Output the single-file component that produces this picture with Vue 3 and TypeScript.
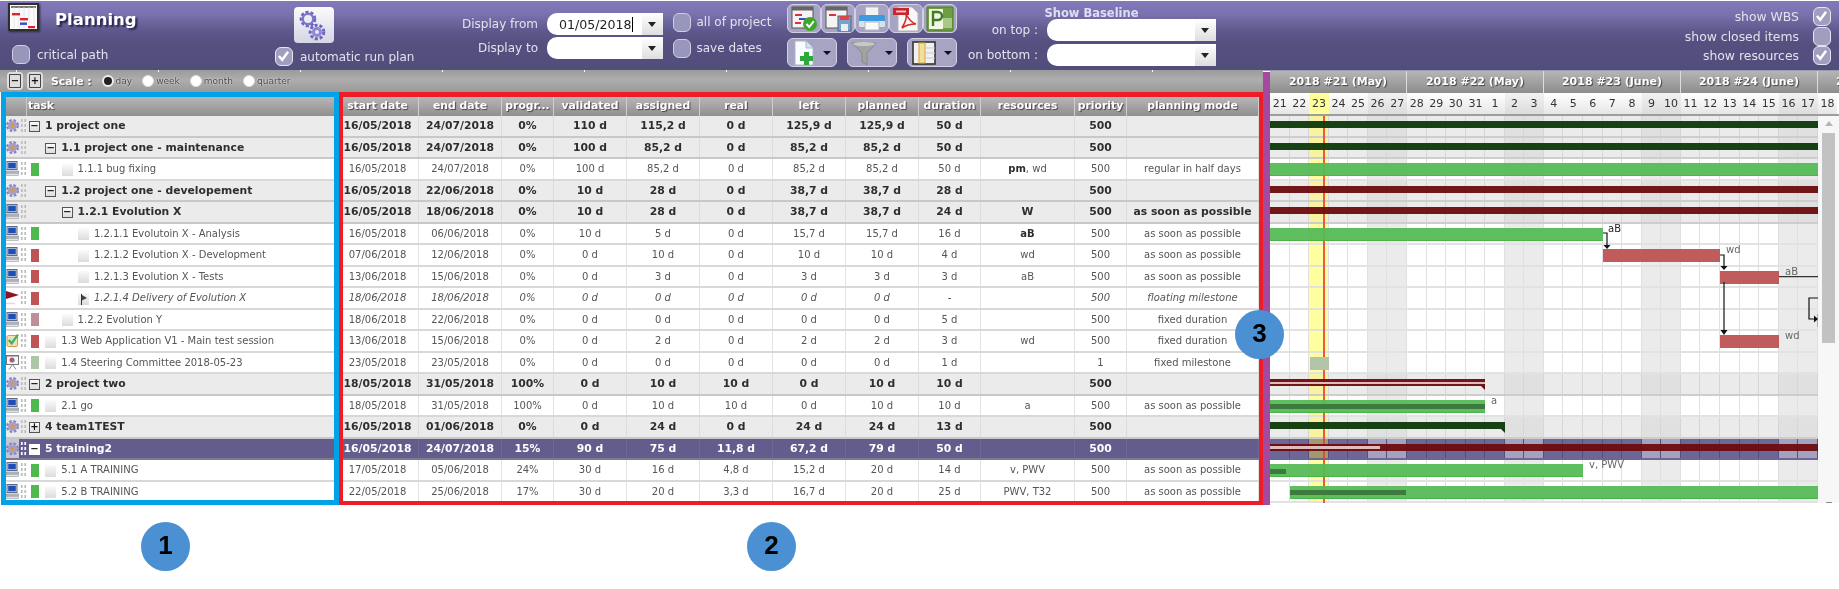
<script setup lang="ts">
type Kind = 'task' | 'group' | 'sel'
type Icon = 'gear' | 'pc' | 'flag' | 'check' | 'board'
interface Row {
  name: string
  level: number
  kind: Kind
  icon: Icon
  tree: 'minus' | 'plus' | 'leaf' | 'flag'
  swatch?: string
  italic?: boolean
  vals: string[]
  res?: string
  resRest?: string
  resBold?: boolean
}
interface Bar {
  row: number
  left: number
  width: number
  type: string
  prog?: number
  tip?: boolean
}
interface Label { row: number; left: number; text: string; dark?: boolean }

const asap = 'as soon as possible'
const green = '#4fb84f'
const red = '#bf5454'

const rows: Row[] = [
  { name: '1 project one', level: 0, kind: 'group', icon: 'gear', tree: 'minus', vals: ['16/05/2018', '24/07/2018', '0%', '110 d', '115,2 d', '0 d', '125,9 d', '125,9 d', '50 d', '', '500', ''] },
  { name: '1.1 project one - maintenance', level: 1, kind: 'group', icon: 'gear', tree: 'minus', vals: ['16/05/2018', '24/07/2018', '0%', '100 d', '85,2 d', '0 d', '85,2 d', '85,2 d', '50 d', '', '500', ''] },
  { name: '1.1.1 bug fixing', level: 2, kind: 'task', icon: 'pc', tree: 'leaf', swatch: green, res: 'pm', resRest: ', wd', resBold: true, vals: ['16/05/2018', '24/07/2018', '0%', '100 d', '85,2 d', '0 d', '85,2 d', '85,2 d', '50 d', '', '500', 'regular in half days'] },
  { name: '1.2 project one - developement', level: 1, kind: 'group', icon: 'gear', tree: 'minus', vals: ['16/05/2018', '22/06/2018', '0%', '10 d', '28 d', '0 d', '38,7 d', '38,7 d', '28 d', '', '500', ''] },
  { name: '1.2.1 Evolution X', level: 2, kind: 'group', icon: 'pc', tree: 'minus', res: 'W', vals: ['16/05/2018', '18/06/2018', '0%', '10 d', '28 d', '0 d', '38,7 d', '38,7 d', '24 d', '', '500', asap] },
  { name: '1.2.1.1 Evolutoin X - Analysis', level: 3, kind: 'task', icon: 'pc', tree: 'leaf', swatch: green, res: 'aB', resBold: true, vals: ['16/05/2018', '06/06/2018', '0%', '10 d', '5 d', '0 d', '15,7 d', '15,7 d', '16 d', '', '500', asap] },
  { name: '1.2.1.2 Evolution X - Development', level: 3, kind: 'task', icon: 'pc', tree: 'leaf', swatch: red, res: 'wd', vals: ['07/06/2018', '12/06/2018', '0%', '0 d', '10 d', '0 d', '10 d', '10 d', '4 d', '', '500', asap] },
  { name: '1.2.1.3 Evolution X - Tests', level: 3, kind: 'task', icon: 'pc', tree: 'leaf', swatch: red, res: 'aB', vals: ['13/06/2018', '15/06/2018', '0%', '0 d', '3 d', '0 d', '3 d', '3 d', '3 d', '', '500', asap] },
  { name: '1.2.1.4 Delivery of Evolution X', level: 3, kind: 'task', icon: 'flag', tree: 'flag', swatch: red, italic: true, vals: ['18/06/2018', '18/06/2018', '0%', '0 d', '0 d', '0 d', '0 d', '0 d', '-', '', '500', 'floating milestone'] },
  { name: '1.2.2 Evolution Y', level: 2, kind: 'task', icon: 'pc', tree: 'leaf', swatch: '#bd9099', vals: ['18/06/2018', '22/06/2018', '0%', '0 d', '0 d', '0 d', '0 d', '0 d', '5 d', '', '500', 'fixed duration'] },
  { name: '1.3 Web Application V1 - Main test session', level: 1, kind: 'task', icon: 'check', tree: 'leaf', swatch: red, res: 'wd', vals: ['13/06/2018', '15/06/2018', '0%', '0 d', '2 d', '0 d', '2 d', '2 d', '3 d', '', '500', 'fixed duration'] },
  { name: '1.4 Steering Committee 2018-05-23', level: 1, kind: 'task', icon: 'board', tree: 'leaf', swatch: '#adc6a8', vals: ['23/05/2018', '23/05/2018', '0%', '0 d', '0 d', '0 d', '0 d', '0 d', '1 d', '', '1', 'fixed milestone'] },
  { name: '2 project two', level: 0, kind: 'group', icon: 'gear', tree: 'minus', vals: ['18/05/2018', '31/05/2018', '100%', '0 d', '10 d', '10 d', '0 d', '10 d', '10 d', '', '500', ''] },
  { name: '2.1 go', level: 1, kind: 'task', icon: 'pc', tree: 'leaf', swatch: green, res: 'a', vals: ['18/05/2018', '31/05/2018', '100%', '0 d', '10 d', '10 d', '0 d', '10 d', '10 d', '', '500', asap] },
  { name: '4 team1TEST', level: 0, kind: 'group', icon: 'gear', tree: 'plus', vals: ['16/05/2018', '01/06/2018', '0%', '0 d', '24 d', '0 d', '24 d', '24 d', '13 d', '', '500', ''] },
  { name: '5 training2', level: 0, kind: 'sel', icon: 'gear', tree: 'minus', vals: ['16/05/2018', '24/07/2018', '15%', '90 d', '75 d', '11,8 d', '67,2 d', '79 d', '50 d', '', '500', ''] },
  { name: '5.1 A TRAINING', level: 1, kind: 'task', icon: 'pc', tree: 'leaf', swatch: green, res: 'v, PWV', vals: ['17/05/2018', '05/06/2018', '24%', '30 d', '16 d', '4,8 d', '15,2 d', '20 d', '14 d', '', '500', asap] },
  { name: '5.2 B TRAINING', level: 1, kind: 'task', icon: 'pc', tree: 'leaf', swatch: green, res: 'PWV, T32', vals: ['22/05/2018', '25/06/2018', '17%', '30 d', '20 d', '3,3 d', '16,7 d', '20 d', '25 d', '', '500', asap] },
]

const columns = [
  ['start date', 76], ['end date', 83], ['progr...', 52], ['validated', 73], ['assigned', 73], ['real', 73],
  ['left', 73], ['planned', 73], ['duration', 62], ['resources', 94], ['priority', 52], ['planning mode', 132],
] as [string, number][]
const gridColumns = columns.map(c => c[1] + 'px').join(' ')

const days = [21, 22, 23, 24, 25, 26, 27, 28, 29, 30, 31, 1, 2, 3, 4, 5, 6, 7, 8, 9, 10, 11, 12, 13, 14, 15, 16, 17, 18]
const isWeekend = (i: number) => i % 7 === 5 || i % 7 === 6
const weeks = ['2018 #21 (May)', '2018 #22 (May)', '2018 #23 (June)', '2018 #24 (June)', '2018 #25 (June)']

const bars: Bar[] = [
  { row: 0, left: 0, width: 548, type: 'sum-green' },
  { row: 1, left: 0, width: 548, type: 'sum-green' },
  { row: 2, left: 0, width: 548, type: 'task-green' },
  { row: 3, left: 0, width: 548, type: 'sum-red' },
  { row: 4, left: 0, width: 548, type: 'sum-red' },
  { row: 5, left: 0, width: 333, type: 'task-green' },
  { row: 6, left: 333, width: 117, type: 'task-red' },
  { row: 7, left: 450, width: 59, type: 'task-red' },
  { row: 9, left: 547, width: 1, type: 'task-pink' },
  { row: 10, left: 450, width: 59, type: 'task-red' },
  { row: 11, left: 40, width: 19, type: 'task-mile' },
  { row: 12, left: 0, width: 215, type: 'sum-red', prog: 215, tip: true },
  { row: 13, left: 0, width: 215, type: 'task-green', prog: 215 },
  { row: 14, left: 0, width: 235, type: 'sum-green', tip: true },
  { row: 15, left: 0, width: 548, type: 'sum-red', prog: 110 },
  { row: 16, left: 0, width: 313, type: 'task-green', prog: 16 },
  { row: 17, left: 20, width: 528, type: 'task-green', prog: 116 },
]
const labels: Label[] = [
  { row: 5, left: 338, text: 'aB', dark: true },
  { row: 6, left: 456, text: 'wd' },
  { row: 7, left: 515, text: 'aB' },
  { row: 10, left: 515, text: 'wd' },
  { row: 13, left: 221, text: 'a' },
  { row: 16, left: 319, text: 'v, PWV' },
]
const barsOf = (i: number) => bars.filter(b => b.row === i)
const labelsOf = (i: number) => labels.filter(l => l.row === i)
const typed = '01/05/2018'
</script>

<template>
  <div class="page">
    <svg class="defs" aria-hidden="true">
      <symbol id="gear" viewBox="0 0 13 15">
        <circle cx="6.5" cy="7.5" r="5.3" fill="none" stroke="#8886bd" stroke-width="2.4" stroke-dasharray="2.6 1.6" />
        <circle cx="6.5" cy="7.5" r="4.6" fill="#a3a1cf" />
        <circle cx="6.5" cy="7.5" r="2" fill="#e8952a" />
      </symbol>
      <symbol id="pc" viewBox="0 0 13 15">
        <rect x="1" y="0.5" width="10" height="8" fill="#d8dde8" stroke="#5f6a80" />
        <rect x="2.2" y="1.7" width="7.6" height="5.6" fill="#1d4fb8" />
        <rect x="0" y="10" width="12.5" height="2" fill="#c4c8d0" stroke="#7a7f88" stroke-width=".6" />
        <rect x="0" y="12.6" width="12.5" height="2" fill="#e2e4e8" stroke="#9a9ea6" stroke-width=".6" />
      </symbol>
      <symbol id="flag" viewBox="0 0 13 15">
        <path d="M0 1 L13 5 L0 9 Z" fill="#8f1420" />
        <path d="M0 13.5 H9" stroke="#dcdcdc" stroke-width="1.6" />
      </symbol>
      <symbol id="check" viewBox="0 0 13 15">
        <rect x="1" y="2.5" width="10.5" height="11" rx="1.5" fill="#f4e2b0" stroke="#d99a3a" />
        <rect x="3" y="4.5" width="6.5" height="7" fill="#cfe0f2" />
        <path d="M2.8 7 L5.6 10.4 L12 1.6" fill="none" stroke="#49b04a" stroke-width="2.2" />
      </symbol>
      <symbol id="board" viewBox="0 0 13 15">
        <rect x="0.5" y="0.5" width="12" height="9" fill="#f6f6f6" stroke="#777" />
        <path d="M0 1 H13" stroke="#777" />
        <circle cx="6" cy="5" r="2.5" fill="#d84a4a" />
        <path d="M6 5 L8.5 5 A2.5 2.5 0 0 1 6 7.5 Z" fill="#3f8fd0" />
        <path d="M6.5 9.5 L3 14.5 M6.5 9.5 L10 14.5" stroke="#888" />
      </symbol>
    </svg>

    <header class="toolbar">
      <section class="sec-title">
        <div class="title-row">
          <svg class="logo" viewBox="0 0 31 28">
            <rect x="1" y="1" width="29" height="26" fill="#fafafa" stroke="#2e2e2e" stroke-width="2" />
            <path d="M3 4 H28" stroke="#555" stroke-width="1.6" />
            <path d="M6 4 V25 M11 4 V25 M16 4 V25 M21 4 V25 M26 4 V25" stroke="#e2e2e2" stroke-width=".8" />
            <rect x="4" y="10" width="8" height="2.4" fill="#e0202a" />
            <rect x="12" y="15" width="8" height="2.4" fill="#e0202a" />
            <rect x="12" y="19.5" width="7" height="2.4" fill="#2a4fd8" />
            <rect x="20" y="23" width="7" height="2.2" fill="#e0202a" />
          </svg>
          <span class="title">Planning</span>
        </div>
        <label class="check-row first"><span class="chk"></span><span>critical path</span></label>
      </section>

      <section class="sec-run">
        <button class="run-btn" type="button" aria-label="run plan">
          <svg viewBox="0 0 40 36" width="40" height="36">
            <circle cx="14" cy="12" r="6.8" fill="none" stroke="#6a66c0" stroke-width="3" stroke-dasharray="3 1.9" />
            <circle cx="14" cy="12" r="5.2" fill="none" stroke="#7c78cc" stroke-width="2.4" />
            <circle cx="14" cy="12" r="2.2" fill="#e8e8f6" />
            <circle cx="23" cy="25" r="6.8" fill="none" stroke="#6a66c0" stroke-width="3" stroke-dasharray="3 1.9" />
            <circle cx="23" cy="25" r="5" fill="#8c88d4" />
            <circle cx="23" cy="25" r="2" fill="#e8e8f6" />
          </svg>
        </button>
        <label class="check-row"><span class="chk light">
          <svg viewBox="0 0 18 19"><path d="M3.5 9.5 L7.5 14 L14.5 4.5" fill="none" stroke="#fff" stroke-width="3" /></svg>
        </span><span>automatic run plan</span></label>
      </section>

      <section class="sec-dates">
        <span class="fld-label">Display from</span>
        <div class="combo first-combo">
          <span class="combo-text">{{ typed }}<i class="caret"></i></span>
          <span class="combo-btn"></span>
        </div>
        <span class="fld-label">Display to</span>
        <div class="combo"><span class="combo-text"></span><span class="combo-btn"></span></div>
      </section>

      <section class="sec-checks">
        <label class="check-row"><span class="chk"></span><span class="up">all of project</span></label>
        <label class="check-row"><span class="chk"></span><span class="up">save dates</span></label>
      </section>

      <section class="sec-icons">
        <div class="icon-line">
          <button class="ibtn" type="button" aria-label="validate">
            <svg viewBox="0 0 28 26" width="28" height="26">
              <rect x="2" y="1" width="21" height="21" fill="#f4f4f4" stroke="#555" />
              <rect x="2" y="1" width="21" height="3.5" fill="#666" />
              <rect x="5" y="8" width="7" height="2" fill="#e0303a" /><rect x="9" y="12" width="7" height="2" fill="#3050d0" /><rect x="5" y="16" width="6" height="2" fill="#e0303a" />
              <circle cx="20" cy="18" r="7" fill="#3fa52c" />
              <path d="M16.5 18 L19.2 21 L23.8 15.2" fill="none" stroke="#fff" stroke-width="2" />
            </svg>
          </button>
          <button class="ibtn" type="button" aria-label="save dates">
            <svg viewBox="0 0 28 26" width="28" height="26">
              <rect x="2" y="1" width="21" height="21" fill="#f4f4f4" stroke="#555" />
              <rect x="2" y="1" width="21" height="3.5" fill="#666" />
              <rect x="5" y="8" width="7" height="2" fill="#e0303a" />
              <rect x="14" y="10" width="13" height="15" fill="#7fa0c8" stroke="#48648c" />
              <rect x="16" y="10" width="9" height="4" fill="#d84848" />
              <rect x="17" y="18" width="7" height="7" fill="#e8eef6" />
            </svg>
          </button>
          <button class="ibtn" type="button" aria-label="print">
            <svg viewBox="0 0 28 26" width="28" height="26">
              <rect x="7.5" y="1" width="13" height="9" fill="#f3f3f3" stroke="#b0b8c4" />
              <rect x="1" y="9" width="26" height="10" rx="2" fill="#3d9ae0" />
              <rect x="1" y="15" width="26" height="6" rx="1" fill="#d8e0e8" />
              <rect x="7" y="16" width="14" height="8" fill="#fafafa" stroke="#b0b8c4" />
            </svg>
          </button>
          <button class="ibtn" type="button" aria-label="pdf">
            <svg viewBox="0 0 28 26" width="28" height="26">
              <path d="M6 1 H20 L26 7 V25 H6 Z" fill="#f8f8f8" stroke="#b5b5b5" />
              <rect x="1" y="2" width="16" height="7" fill="#c8242c" />
              <rect x="4" y="4.6" width="10" height="1.8" fill="#f8d0d0" />
              <path d="M10 22 C14 15 15 11 14 8 C17 14 20 17 24 18 C18 18 14 19 10 22 Z" fill="none" stroke="#d42a2a" stroke-width="1.6" />
            </svg>
          </button>
          <button class="ibtn" type="button" aria-label="project export">
            <svg viewBox="0 0 28 26" width="28" height="26">
              <rect x="1" y="1" width="26" height="24" rx="1" fill="#6d9d3e" stroke="#4d7a2a" />
              <rect x="3" y="3" width="14" height="20" fill="#f2f6e6" />
              <path d="M7 20 V6 H12 A4 4 0 0 1 12 14 H7" fill="none" stroke="#3f7d22" stroke-width="2.4" />
              <rect x="17" y="12" width="9" height="10" fill="#a8c888" />
            </svg>
          </button>
        </div>
        <div class="icon-line">
          <button class="ibtn wide" type="button" aria-label="add">
            <svg viewBox="0 0 22 26" width="22" height="26">
              <path d="M2 1 H13 L20 8 V25 H2 Z" fill="#fafcff" stroke="#a8b8d0" />
              <path d="M13 1 V8 H20" fill="#d8e4f2" stroke="#a8b8d0" />
              <path d="M11 12 H16 V16 H20 V21 H16 V25 H11 V21 H7 V16 H11 Z" fill="#2fa83a" />
            </svg>
            <i class="tri"></i>
          </button>
          <button class="ibtn wide" type="button" aria-label="filter">
            <svg viewBox="0 0 26 26" width="26" height="26">
              <path d="M1 3 H25 L16 13 V25 L11 22 V13 Z" fill="#a2a2a2" stroke="#8a8a8a" />
              <ellipse cx="13" cy="4" rx="11" ry="2" fill="#c8c8c8" />
            </svg>
            <i class="tri"></i>
          </button>
          <button class="ibtn wide" type="button" aria-label="columns">
            <svg viewBox="0 0 24 26" width="24" height="26">
              <rect x="1" y="2" width="22" height="22" fill="#f0f0f0" stroke="#333" stroke-width="1.6" />
              <rect x="7" y="3" width="6" height="20" fill="#f0dfa0" stroke="#d8a830" />
              <path d="M14 8 H23 M14 13 H23 M14 18 H23" stroke="#c8c8c8" />
            </svg>
            <i class="tri"></i>
          </button>
        </div>
      </section>

      <section class="sec-base">
        <div class="base-title">Show Baseline</div>
        <div class="base-grid">
          <span class="fld-label">on top :</span>
          <div class="combo"><span class="combo-text"></span><span class="combo-btn"></span></div>
          <span class="fld-label">on bottom :</span>
          <div class="combo"><span class="combo-text"></span><span class="combo-btn"></span></div>
        </div>
      </section>

      <section class="sec-show">
        <label class="show-row"><span>show WBS</span><span class="chk light">
          <svg viewBox="0 0 18 19"><path d="M3.5 9.5 L7.5 14 L14.5 4.5" fill="none" stroke="#fff" stroke-width="3" /></svg>
        </span></label>
        <label class="show-row"><span>show closed items</span><span class="chk light"></span></label>
        <label class="show-row"><span>show resources</span><span class="chk light">
          <svg viewBox="0 0 18 19"><path d="M3.5 9.5 L7.5 14 L14.5 4.5" fill="none" stroke="#fff" stroke-width="3" /></svg>
        </span></label>
      </section>
    </header>

    <div class="work">
      <div class="left">
        <div class="scalebar">
          <span class="mini">−</span>
          <span class="mini">+</span>
          <span class="scale-title">Scale :</span>
          <label class="radio on"><i></i>day</label>
          <label class="radio"><i></i>week</label>
          <label class="radio"><i></i>month</label>
          <label class="radio"><i></i>quarter</label>
        </div>
        <div class="panels">
          <div class="frame-blue">
            <div class="task-head"><span class="head-icon"></span><span class="head-task">task</span></div>
            <div v-for="r in rows" :key="r.name" class="row task-row" :class="r.kind">
              <svg class="ticon"><use :href="'#' + r.icon" /></svg>
              <span class="dots"></span>
              <div class="tree" :style="{ paddingLeft: 2 + r.level * 16.3 + 'px' }">
                <span v-if="r.swatch" class="swatch" :style="{ background: r.swatch }"></span>
                <span v-if="r.tree === 'minus' || r.tree === 'plus'" class="expander">{{ r.tree === 'minus' ? '−' : '+' }}</span>
                <span v-else class="leaf">
                  <svg v-if="r.tree === 'flag'" viewBox="0 0 11 12" width="11" height="12"><path d="M3.5 1 V12" stroke="#333" /><path d="M4 2 L9 5 L4 7.5 Z" fill="#444" /></svg>
                </span>
                <span class="tname" :class="{ it: r.italic }">{{ r.name }}</span>
              </div>
            </div>
          </div>
          <div class="frame-red">
            <div class="grid-head" :style="{ gridTemplateColumns: gridColumns }">
              <span v-for="c in columns" :key="c[0]">{{ c[0] }}</span>
            </div>
            <div v-for="r in rows" :key="r.name" class="row data-row" :class="r.kind" :style="{ gridTemplateColumns: gridColumns }">
              <span v-for="(v, i) in r.vals" :key="i" class="cell" :class="{ it: r.italic }">
                <template v-if="i === 9 && r.res"><b v-if="r.resBold">{{ r.res }}</b><template v-else>{{ r.res }}</template>{{ r.resRest }}</template>
                <template v-else>{{ v }}</template>
              </span>
            </div>
          </div>
        </div>
      </div>

      <div class="splitter"></div>

      <div class="chart">
        <div class="weeks">
          <span v-for="w in weeks" :key="w" class="week">{{ w }}</span>
        </div>
        <div class="days">
          <span v-for="(d, i) in days" :key="i" class="day" :class="{ we: isWeekend(i) && i < 28, now: i === 2 }">{{ d }}</span>
        </div>
        <div class="chart-body">
          <div class="gantt">
            <div v-for="(r, ri) in rows" :key="r.name" class="grow" :class="r.kind">
              <span v-for="(d, i) in days.slice(0, 28)" :key="i" class="gcell" :class="{ we: isWeekend(i), now: i === 2 }"></span>
              <div v-for="(b, bi) in barsOf(ri)" :key="bi" class="bar" :class="[b.type, { tip: b.tip }]" :style="{ left: b.left + 'px', width: b.width + 'px' }">
                <i v-if="b.prog" class="prog" :style="{ width: b.prog + 'px' }"></i>
              </div>
              <span v-for="l in labelsOf(ri)" :key="l.text" class="glabel" :class="{ dark: l.dark }" :style="{ left: l.left + 'px' }">{{ l.text }}</span>
            </div>
            <i class="nowline"></i>
            <svg class="links" viewBox="0 0 548 387" width="548" height="387">
              <g fill="none" stroke="#111" stroke-width="1.2">
                <path d="M333 117 H337 V130" />
                <path d="M450 139 H454 V151" />
                <path d="M454 166 V214" />
                <path d="M509 160.7 H548" stroke="#333" />
                <path d="M548 182 H539 V203 H544" />
              </g>
              <g fill="#111">
                <path d="M333.5 129 H340.5 L337 133 Z" />
                <path d="M450.5 150 H457.5 L454 154 Z" />
                <path d="M450.5 214 H457.5 L454 219 Z" />
                <path d="M544 199.5 V206.5 L548 203 Z" />
              </g>
            </svg>
          </div>
          <div class="scrollbar">
            <i class="sb-up"></i>
            <i class="sb-thumb"></i>
            <i class="sb-down"></i>
          </div>
        </div>
      </div>
    </div>

    <div class="badge badge-three">3</div>
    <div class="foot">
      <div class="badge">1</div>
      <div class="badge">2</div>
    </div>
  </div>
</template>

<style scoped>
.page {
  position: relative;
  width: 1839px;
  height: 589px;
  background: #fff;
  overflow: hidden;
  font-family: "DejaVu Sans", Verdana, sans-serif;
  font-size: 10px;
  color: #555;
  filter: blur(0.35px);
}
.defs { position: absolute; width: 0; height: 0; }

.toolbar {
  display: flex;
  height: 69px;
  margin-top: 1px;
  color: #e2e2ee;
  font-size: 12px;
  background: linear-gradient(#8279bb 0%, #7a73ae 18%, #5f5a8e 42%, #55507f 60%, #524e7c 100%);
  box-shadow: 0 1px 0 #9c9aae;
}
.toolbar section { flex: none; }
.sec-title { width: 275px; padding: 2px 0 0 8px; box-sizing: border-box; }
.title-row { display: flex; align-items: center; gap: 16px; }
.logo { width: 31px; height: 28px; flex: none; filter: drop-shadow(1px 1px 1px #2a2850); }
.title {
  font-weight: 700;
  font-size: 16.5px;
  color: #fff;
  text-shadow: 2px 2px 2px #22204a;
  margin-top: 4px;
}
.check-row { display: flex; align-items: center; gap: 7px; height: 19px; }
.check-row.first { margin: 14px 0 0 4px; }
.up { margin-top: -2px; }
.chk {
  display: block;
  flex: none;
  width: 18px;
  height: 19px;
  box-sizing: border-box;
  border: 1.5px solid #cfcee0;
  border-radius: 6px;
  background: #9896ba;
}
.chk svg { display: block; width: 15px; height: 16px; }
.chk.light { background: #a09ebf; border-color: #e6e6f0; }
.sec-run { width: 175px; padding: 6px 0 0 0; box-sizing: border-box; }
.run-btn {
  display: block;
  width: 40px;
  height: 36px;
  padding: 0;
  margin: 0 0 4px 19px;
  border: 0;
  border-radius: 4px;
  background: linear-gradient(#fbfbfd, #d5d5e4);
}
.sec-dates {
  width: 215px;
  padding-top: 12px;
  box-sizing: border-box;
  display: grid;
  grid-template-columns: 88px 116px;
  grid-auto-rows: 22px;
  column-gap: 9px;
  row-gap: 2px;
  align-items: center;
}
.fld-label { text-align: right; white-space: nowrap; }
.combo { display: flex; height: 22px; }
.combo-text {
  flex: 1;
  display: flex;
  align-items: center;
  padding-left: 12px;
  background: #fff;
  border-radius: 10px 0 0 10px;
  color: #222;
  font-size: 12.6px;
}
.caret { display: block; width: 1px; height: 15px; background: #000; margin-left: 0; }
.combo-btn {
  position: relative;
  flex: none;
  width: 21px;
  background: linear-gradient(#fff, #dedede);
}
.combo-btn::after {
  content: "";
  position: absolute;
  left: 6px;
  top: 9px;
  border: 4px solid transparent;
  border-top: 5px solid #222;
  border-bottom: 0;
}
.sec-checks {
  width: 122px;
  box-sizing: border-box;
  padding: 12px 0 0 7.5px;
  display: flex;
  flex-direction: column;
  gap: 7px;
}
.sec-checks .check-row { gap: 6px; }
.sec-icons { width: 170px; padding-top: 3px; display: flex; flex-direction: column; gap: 5px; }
.icon-line { display: flex; justify-content: space-between; height: 29px; }
.ibtn {
  width: 34px;
  height: 29px;
  padding: 0;
  box-sizing: border-box;
  display: flex;
  align-items: center;
  justify-content: center;
  border: 1.5px solid #d2d1e4;
  border-radius: 6px;
  background: #a6a4c2;
}
.ibtn.wide { width: 50px; gap: 6px; }
.tri { display: block; border: 4px solid transparent; border-top: 4px solid #111; border-bottom: 0; margin-left: 2px; }
.sec-base { width: 259px; padding-top: 4px; box-sizing: border-box; }
.base-title {
  margin-left: 87.5px;
  font-size: 11.5px;
  line-height: 16px;
  font-weight: 700;
  color: #dde0f4;
}
.base-grid {
  margin-top: -2px;
  display: grid;
  grid-template-columns: 81px 169px;
  grid-auto-rows: 22px;
  column-gap: 9px;
  row-gap: 3px;
  align-items: center;
}
.sec-show {
  flex: 1 !important;
  padding: 6px 8px 0 0;
  display: flex;
  flex-direction: column;
  align-items: flex-end;
  gap: 0.5px;
  font-size: 12.4px;
}
.show-row { display: flex; align-items: center; gap: 14px; height: 19px; }

.work { display: flex; height: 435px; }
.left { width: 1263px; flex: none; }
.scalebar {
  display: flex;
  align-items: center;
  height: 22px;
  padding-left: 7px;
  box-sizing: border-box;
  background:
    repeating-linear-gradient(90deg, transparent 0 16px, #fff 16px 17px, transparent 17px 142px) 0 0 / 100% 2px no-repeat,
    linear-gradient(#9b9b9b, #adadad 45%, #999 100%);
}
.mini {
  width: 16px;
  height: 18px;
  box-sizing: border-box;
  margin-right: 4px;
  border-radius: 3px;
  background: #dedede;
  box-shadow: inset 0 0 0 2px #dedede, inset 0 0 0 3px #444;
  color: #111;
  font-size: 10px;
  font-weight: 700;
  line-height: 18px;
  text-align: center;
}
.scale-title {
  margin: 0 10px 0 4px;
  font-weight: 700;
  font-size: 10.8px;
  color: #fff;
  text-shadow: 1px 1px 1px #555;
}
.radio {
  display: flex;
  align-items: center;
  gap: 2px;
  margin-right: 10px;
  font-size: 9px;
  color: #4a4a4a;
  text-shadow: 0 0 2px #fff;
}
.radio i {
  display: block;
  width: 12px;
  height: 12px;
  box-sizing: border-box;
  border-radius: 50%;
  background: #fff;
  border: 1px solid #ddd;
}
.radio.on i { background: #222; border: 2px solid #eee; }
.panels { display: flex; height: 413px; }
.frame-blue {
  width: 338px;
  margin-left: 1px;
  box-sizing: border-box;
  border: 5px solid #00a3e8;
  overflow: hidden;
  background: #fff;
}
.frame-red {
  width: 924px;
  box-sizing: border-box;
  border: 4px solid #ee1c25;
  border-top-width: 5px;
  overflow: hidden;
  background: #fff;
}
.task-head, .grid-head {
  height: 19px;
  color: #fff;
  font-weight: 700;
  font-size: 10.8px;
  line-height: 18px;
  text-shadow: 1px 1px 1px #444;
  background: linear-gradient(#b7b7b7, #8f8f8f);
}
.task-head { display: flex; }
.head-icon { width: 21px; border-right: 1px solid #c8c8c8; box-sizing: border-box; }
.head-task { padding-left: 1px; }
.grid-head { display: grid; }
.grid-head span {
  text-align: center;
  border-right: 1px solid #cfcfcf;
  white-space: nowrap;
  overflow: hidden;
}
.grid-head span:first-child, .cell:first-child { padding-right: 6px; }
.row {
  height: 21.5px;
  box-sizing: border-box;
  border-bottom: 2px solid #d8d8d8;
  background: #fff;
  line-height: 20.5px;
}
.row.group {
  background: #ebebeb;
  border-bottom-color: #c8c8c8;
  font-weight: 700;
  font-size: 10.8px;
  color: #2e2e2e;
}
.row.sel {
  background: #625d8d;
  border-bottom-color: #7a7a90;
  font-weight: 700;
  font-size: 10.8px;
  color: #fff;
}
.task-row { display: flex; }
.ticon { width: 13px; height: 15px; margin: 2px 1px 0 0; flex: none; }
.sel .ticon { margin-top: 0; height: 19.5px; background: #c6c6d6; }
.dots {
  flex: none;
  width: 7px;
  height: 15px;
  margin-top: 2px;
  background-image: radial-gradient(circle, #bdbdbd 1.1px, transparent 1.3px);
  background-size: 3.5px 5px;
}
.sel .dots { background-image: radial-gradient(circle, #fff 1.1px, transparent 1.3px); }
.tree {
  position: relative;
  flex: 1;
  display: flex;
  align-items: center;
  height: 21px;
  box-sizing: border-box;
  white-space: nowrap;
}
.swatch { position: absolute; left: 3.7px; top: 3.5px; width: 8.5px; height: 13px; }
.expander {
  flex: none;
  width: 11px;
  height: 11px;
  box-sizing: border-box;
  margin-right: 5px;
  border: 1px solid #555;
  background: linear-gradient(#fafafa, #ddd);
  color: #111;
  font-size: 10px;
  line-height: 8px;
  font-weight: 700;
  text-align: center;
}
.sel .expander { background: #fff; border-color: #fff; }
.leaf {
  flex: none;
  width: 11px;
  height: 12px;
  margin-right: 5px;
  background: linear-gradient(#fafafa, #dcdcdc);
}
.leaf svg { display: block; }
.it { font-style: italic; }
.data-row { display: grid; }
.cell {
  text-align: center;
  border-right: 1px solid #e2e2e2;
  white-space: nowrap;
  overflow: hidden;
  height: 19.5px;
}
.group .cell { border-right-color: #dcdcdc; }
.sel .cell { border-right-color: #6d6898; }
.cell b { color: #2e2e2e; }

.splitter { flex: none; width: 7px; margin-top: 2px; background: #a5499f; }
.chart { flex: none; width: 569px; overflow: hidden; }
.weeks { display: flex; height: 23px; }
.week {
  flex: none;
  width: 137px;
  box-sizing: border-box;
  margin-top: 1px;
  border-right: 1px solid #ddd;
  color: #fff;
  font-weight: 700;
  font-size: 11px;
  line-height: 21px;
  text-align: center;
  white-space: nowrap;
  text-shadow: 1px 1px 1px #444;
  background: linear-gradient(#b5b5b5, #8d8d8d);
}
.days {
  display: grid;
  grid-template-columns: repeat(29, 19.571px);
  height: 23px;
  box-sizing: border-box;
  border-bottom: 2px solid #9d9d9d;
}
.day {
  font-size: 11px;
  line-height: 21px;
  text-align: center;
  color: #333;
  background: linear-gradient(#fff, #e6e6e6);
}
.day.we { background: linear-gradient(#f2f2f2, #dcdcdc); }
.day.now { background: #ffff9a; }
.chart-body { display: flex; height: 387px; }
.gantt { position: relative; width: 548px; flex: none; }
.grow {
  position: relative;
  display: grid;
  grid-template-columns: repeat(28, 19.571px);
  height: 21.5px;
  box-sizing: border-box;
  border-bottom: 2px solid #e2e2e2;
}
.grow.group { border-bottom-color: #cdcdcd; }
.grow.sel { border-bottom-color: #6b6694; }
.gcell { border-right: 1px solid #e0e0e0; background: #fff; }
.gcell.we { background: #ebebeb; }
.gcell.now { background: #ffff9f; }
.group .gcell { background: #ebebeb; border-right-color: #d6d6d6; }
.group .gcell.we { background: #e0e0e0; }
.group .gcell.now { background: #f8f39e; }
.sel .gcell { background: #6c6796; border-right-color: #55507f; }
.sel .gcell.we { background: #a5a2bf; }
.sel .gcell.now { background: #a09a6c; }
.nowline { position: absolute; left: 53px; top: 0; bottom: 0; width: 2px; background: #f03a32; opacity: .85; }
.bar { position: absolute; z-index: 2; box-sizing: border-box; }
.sum-green { top: 5px; height: 7px; background: rgba(15, 58, 12, .96); }
.sum-red { top: 5px; height: 7px; background: rgba(107, 12, 14, .95); }
.task-green { top: 4px; height: 13px; background: rgba(85, 186, 85, .94); border-bottom: 1px solid #4ab34a; }
.task-red { top: 4px; height: 13px; background: rgba(188, 82, 82, .94); }
.task-pink { top: 4px; height: 13px; background: #d8a0a8; }
.task-mile { top: 4px; height: 13px; background: #b3c5a8; }
.prog { position: absolute; left: 0; display: block; }
.sum-red .prog { top: 2.5px; height: 2.5px; background: #e2bcbc; }
.task-green .prog { top: 4.5px; height: 5px; background: #3c7a3e; }
.tip::after {
  content: "";
  position: absolute;
  right: 0;
  top: 7px;
  border-left: 4px solid transparent;
  border-top: 4px solid currentColor;
}
.sum-red.tip { color: #6b0c0e; }
.sum-green.tip { color: #0f3a0c; }
.glabel { position: absolute; z-index: 3; top: -1px; font-size: 10px; line-height: 12px; color: #666; white-space: nowrap; }
.glabel.dark { color: #222; }
.links { position: absolute; left: 0; top: 0; z-index: 3; }
.scrollbar {
  position: relative;
  flex: none;
  width: 21px;
  height: 387px;
  background: #f7f7f7;
  display: flex;
  flex-direction: column;
  align-items: center;
}
.sb-up { margin-top: 5px; border: 4px solid transparent; border-bottom: 5px solid #b5b5b5; border-top: 0; }
.sb-thumb { display: block; margin-top: 7px; width: 13px; height: 210px; background: #c2c2c2; }
.sb-down { margin-top: auto; margin-bottom: 0; width: 6px; height: 1px; background: #888; }

.foot { display: flex; gap: 557px; padding: 17px 0 0 141px; }
.badge {
  flex: none;
  width: 49px;
  height: 49px;
  border-radius: 50%;
  background: #4a90d2;
  color: #000;
  font-family: "Liberation Sans", Arial, sans-serif;
  font-size: 26px;
  font-weight: 700;
  line-height: 47px;
  text-align: center;
}
.badge-three { position: absolute; left: 1235px; top: 310px; z-index: 5; }
</style>

<style>
html, body { margin: 0; background: #fff; overflow: hidden; }
</style>
